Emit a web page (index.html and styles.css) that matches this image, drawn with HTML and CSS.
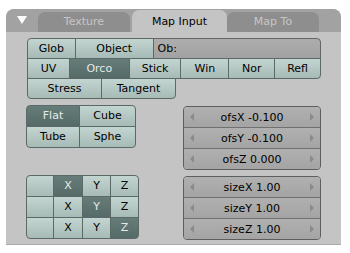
FILE: index.html
```html
<!DOCTYPE html>
<html lang="en">
<head>
    <meta charset="UTF-8">
    <title>Map Input</title>
    <link rel="stylesheet" href="styles.css">
</head>
<body>
    <div class="panel">
        <div class="header">
            <span class="collapse"></span>
            <div class="tab">Texture</div>
            <div class="tab active">Map Input</div>
            <div class="tab">Map To</div>
        </div>

        <div class="panel-body">
            <div class="coords">
                <div class="row">
                    <div class="btn tl b-glob">Glob</div>
                    <div class="btn b-object">Object</div>
                    <div class="field tr b-ob">Ob:</div>
                </div>
                <div class="row">
                    <div class="btn b-uv">UV</div>
                    <div class="btn on b-orco">Orco</div>
                    <div class="btn b-stick">Stick</div>
                    <div class="btn b-win">Win</div>
                    <div class="btn b-nor">Nor</div>
                    <div class="btn br b-refl">Refl</div>
                </div>
                <div class="row">
                    <div class="btn bl b-half">Stress</div>
                    <div class="btn br b-half">Tangent</div>
                </div>
            </div>

            <div class="lower">
                <div class="left-col">
                    <div class="grid proj">
                        <div class="btn on tl">Flat</div>
                        <div class="btn tr">Cube</div>
                        <div class="btn bl">Tube</div>
                        <div class="btn br">Sphe</div>
                    </div>

                    <div class="grid axes">
                        <div class="btn tl"></div>
                        <div class="btn on">X</div>
                        <div class="btn">Y</div>
                        <div class="btn tr">Z</div>
                        <div class="btn"></div>
                        <div class="btn">X</div>
                        <div class="btn on">Y</div>
                        <div class="btn">Z</div>
                        <div class="btn bl"></div>
                        <div class="btn">X</div>
                        <div class="btn">Y</div>
                        <div class="btn on br">Z</div>
                    </div>
                </div>

                <div class="right-col">
                    <div class="numgroup">
                        <div class="num"><span class="arr l"></span><span class="val">ofsX -0.100</span><span class="arr r"></span></div>
                        <div class="num"><span class="arr l"></span><span class="val">ofsY -0.100</span><span class="arr r"></span></div>
                        <div class="num"><span class="arr l"></span><span class="val">ofsZ 0.000</span><span class="arr r"></span></div>
                    </div>
                    <div class="numgroup">
                        <div class="num"><span class="arr l"></span><span class="val">sizeX 1.00</span><span class="arr r"></span></div>
                        <div class="num"><span class="arr l"></span><span class="val">sizeY 1.00</span><span class="arr r"></span></div>
                        <div class="num"><span class="arr l"></span><span class="val">sizeZ 1.00</span><span class="arr r"></span></div>
                    </div>
                </div>
            </div>
        </div>
    </div>
</body>
</html>
```

FILE: styles.css
```css
body {
    margin: 0;
    background-color: #ffffff;
    font-family: "DejaVu Sans", Verdana, sans-serif;
    font-size: 11px;
}

.panel {
    margin: 9px 0 0 6px;
    width: 335px;
    height: 236px;
    background-color: #c4c4c4;
    border-radius: 8px 8px 0 0;
    border-bottom: 1px solid #aaaaaa;
    box-sizing: border-box;
    overflow: hidden;
}

.header {
    height: 23px;
    background-color: #a2a2a2;
    display: flex;
    align-items: flex-end;
    padding-left: 11px;
}

.collapse {
    width: 0;
    height: 0;
    border-left: 5px solid transparent;
    border-right: 5px solid transparent;
    border-top: 8px solid #ffffff;
    margin: 0 11px 8px 0;
}

.tab {
    width: 92px;
    height: 20px;
    line-height: 20px;
    text-align: center;
    background-color: #8e8e8e;
    color: #c6c6c6;
    border-radius: 7px 7px 0 0;
    margin-right: 2px;
}

.tab.active {
    height: 22px;
    line-height: 24px;
    width: 95px;
    background-color: #c4c4c4;
    color: #000000;
    margin-right: 0;
}

.panel-body {
    padding: 6px 20px 0 21px;
}

.row {
    display: flex;
    margin-top: -1px;
}

.row:first-child {
    margin-top: 0;
}

.btn,
.field {
    box-sizing: border-box;
    height: 21px;
    line-height: 19px;
    border: 1px solid #5c6a67;
    margin-left: -1px;
    text-align: center;
    color: #000000;
    background: linear-gradient(#c3d5d1, #a6bab6);
}

.row .btn:first-child {
    margin-left: 0;
}

.btn.on {
    background: linear-gradient(#667c78, #566b67);
    color: #e4ebea;
}

.field {
    text-align: left;
    padding-left: 4px;
    background: linear-gradient(#adadad, #a2a2a2);
    border-color: #656565;
}

/* button widths in the top block */
.b-glob { width: 49px; }
.b-object { width: 79px; }
.b-ob { width: 169px; }
.b-uv { width: 43px; }
.b-orco { width: 61px; }
.b-stick { width: 53px; }
.b-win { width: 49px; }
.b-nor { width: 47px; }
.b-refl { width: 47px; }
.b-half { width: 75px; }

.tl { border-top-left-radius: 4px; }
.tr { border-top-right-radius: 4px; }
.bl { border-bottom-left-radius: 4px; }
.br { border-bottom-right-radius: 4px; }

.lower {
    display: flex;
    justify-content: space-between;
    margin-top: 7px;
}

.grid {
    display: grid;
}

.grid .btn {
    margin: -1px 0 0 -1px;
    height: 22px;
    line-height: 20px;
}

.proj {
    grid-template-columns: 53px 56px;
    padding: 1px 0 0 1px;
    margin: -1px 0 0 -1px;
}

.axes {
    grid-template-columns: 27px 29px 28px 28px;
    padding: 1px 0 0 1px;
    margin: 27px 0 0 -1px;
}

.right-col {
    display: flex;
    flex-direction: column;
    gap: 6px;
}

.numgroup {
    width: 138px;
    border: 1px solid #5e5e5e;
    border-radius: 4px;
    overflow: hidden;
    box-sizing: border-box;
}

.num {
    display: flex;
    align-items: center;
    height: 21px;
    background: linear-gradient(#b0b0b0, #a4a4a4);
    border-top: 1px solid #707070;
    box-sizing: border-box;
    padding: 0 6px;
}

.num:first-child {
    border-top: none;
    height: 20px;
}

.val {
    flex: 1;
    text-align: center;
    color: #000000;
}

.arr {
    width: 0;
    height: 0;
    border-top: 4px solid transparent;
    border-bottom: 4px solid transparent;
}

.arr.l {
    border-right: 4px solid #8a8a8a;
}

.arr.r {
    border-left: 4px solid #8a8a8a;
}
```
